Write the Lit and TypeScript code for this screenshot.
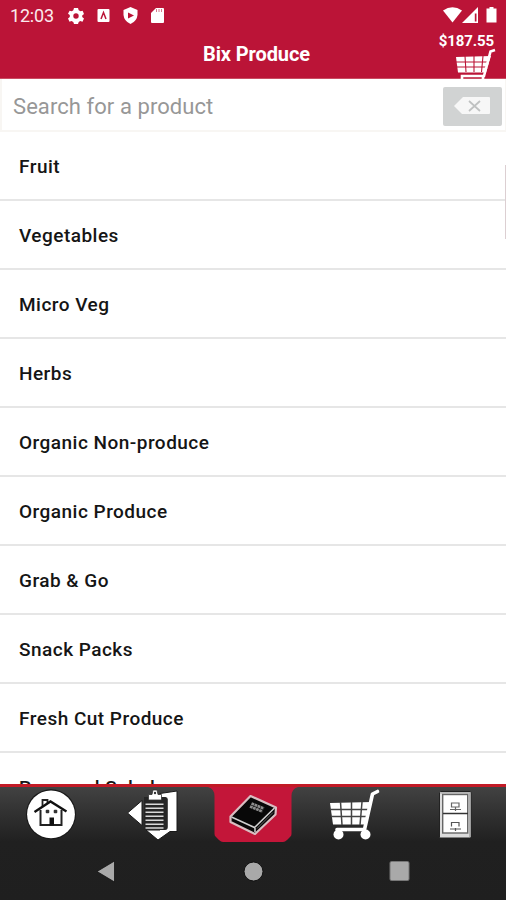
import { LitElement, html, css, svg } from "lit";
import { customElement } from "lit/decorators.js";

const CATEGORIES = [
  "Fruit",
  "Vegetables",
  "Micro Veg",
  "Herbs",
  "Organic Non-produce",
  "Organic Produce",
  "Grab & Go",
  "Snack Packs",
  "Fresh Cut Produce",
  "Prepared Salads",
];

// Shopping cart, drawn in a 56x56 box; grid lines take the colour of the backdrop.
const cart = (line: string) => svg`
  <path d="M4 16 L46 15 L40 37.500 L7 37.500Z" fill="#fff"/>
  <path d="M4 22.500H45M5 29.500H42M14.500 15L16 38M25.500 15V38M36 15L34 38" stroke="${line}" stroke-width="1.500" fill="none"/>
  <path d="M51.500 4.500 L46.500 7 L38.500 42.500 H11" stroke="#fff" stroke-width="3.600" fill="none" stroke-linecap="round" stroke-linejoin="round"/>
  <circle cx="12.500" cy="47.500" r="5" fill="#fff"/><circle cx="39.500" cy="47.500" r="5" fill="#fff"/>
  <path d="M9 46.500L13 42.500M36 46.500L39.500 42.500" stroke="#fff" stroke-width="2.500"/>`;

const homeIcon = html`<svg width="56" height="56" viewBox="0 0 56 56">
  <circle cx="28" cy="27.300" r="25" fill="#181818"/>
  <circle cx="28" cy="27.300" r="23.900" fill="#fff"/>
  <path d="M19.500 19V13H24.500V17" fill="#fff" stroke="#222" stroke-width="1.800"/>
  <path d="M17.500 23V38H38.500V23" fill="#fff" stroke="#222" stroke-width="2"/>
  <path d="M11.500 25L27.500 14.500L43.500 24.500" fill="none" stroke="#111" stroke-width="2.400"/>
  <path d="M26.500 30.500H31V38.500H26.500Z" fill="#111"/>
  <rect x="22.700" y="22.700" width="3.600" height="3.600" rx="1" fill="#333"/><rect x="30.700" y="22.700" width="3.600" height="3.600" rx="1" fill="#333"/>
</svg>`;

const orderIcon = html`<svg width="56" height="56" viewBox="0 0 56 56">
  <path d="M3.500 26L18 13.500V38.500Z" fill="#fff" stroke="#181818"/>
  <path d="M36 6.500L53 4V44.500H46L34 53L22 43H36Z" fill="#fff" stroke="#181818"/>
  <path d="M20 10H41.500Q43.800 10 43.800 12.500V40Q43.800 43 41 43H20Z" fill="#262626"/>
  <path d="M21.500 17.200H39.500M21.500 21.200H39.500M21.500 25.200H39.500M21.500 29.200H39.500M21.500 33.200H39.500M21.500 37.200H39.500M21.500 41H39.500" stroke="#d9d9d9" stroke-width="1.500"/>
  <path d="M24.500 7.500H28L29 3H33L34 7.500H37.500V13H24.500Z" fill="#fff" stroke="#333" stroke-width=".8"/>
  <circle cx="31" cy="6" r="1.200" fill="#333"/>
</svg>`;

const bookIcon = html`<svg width="56" height="56" viewBox="0 0 56 56">
  <path d="M25.500 9L51 20.500L50.500 27.500L30 47L5.500 35V29.500Z" fill="#080808" stroke="#d9bdc1" stroke-width="2.200" stroke-linejoin="round"/>
  <path d="M6.500 30L29.500 40.500L49.500 21" fill="none" stroke="#d0d0d0" stroke-width="1.500"/>
  <path d="M30 41V45" stroke="#d0d0d0" stroke-width="1.500"/>
  <path d="M48 25.500L32 41.500" stroke="#777" stroke-width=".8"/>
  <path d="M26.500 16.500L39 21.500M25 19.500L37.500 24.500" stroke="#8d8d8d" stroke-width="2.700" stroke-dasharray="2.800 .5"/>
</svg>`;

const cartIcon = html`<svg width="56" height="56" viewBox="0 0 56 56">${cart("#444")}</svg>`;

const cabinetIcon = html`<svg width="56" height="56" viewBox="0 0 56 56">
  <rect x="12.500" y="4.500" width="31.500" height="46.500" rx="1" fill="#dcdcdc" stroke="#222"/>
  <path d="M43 5.500V50" stroke="#a5a5a5" stroke-width="1.600"/>
  <path d="M13 5.800H43" stroke="#b5b5b5" stroke-width="1.600"/>
  <rect x="15.700" y="7.500" width="25" height="38.500" fill="#fff" stroke="#666" stroke-width="1.400"/>
  <path d="M16 26.500H41" stroke="#333" stroke-width="1.500"/>
  <path d="M24.500 16H32V20H24.500ZM23 22.500H34M28.500 20V24" fill="none" stroke="#666" stroke-width="1.200"/>
  <path d="M24.500 39.500V35.500H32V39.500M23 42H34M28.500 41V44" fill="none" stroke="#555" stroke-width="1.200"/>
</svg>`;

@customElement("app-root")
export class AppRoot extends LitElement {
  static styles = css`
    :host {
      display: flex;
      flex-direction: column;
      width: 506px;
      height: 900px;
      overflow: hidden;
      background: #fff;
      font-family: Roboto, "Liberation Sans", sans-serif;
    }
    svg { display: block; flex: none; }
    header {
      flex: none;
      height: 79px;
      box-sizing: border-box;
      background: #bb1437;
      border-bottom: 1px solid #c94d62;
      color: #fff;
      position: relative;
    }
    .status {
      height: 32px;
      display: flex;
      align-items: center;
      padding: 0 7px 0 10px;
      box-sizing: border-box;
    }
    .time { font-size: 18px; line-height: 32px; width: 58px; color: #fbe9ed; white-space: nowrap; letter-spacing: -0.2px; }
    .spacer { flex: 1; }
    .title {
      display: flex;
      justify-content: center;
      padding-left: 7px;
      font-size: 20px;
      font-weight: 700;
      line-height: 24px;
      margin-top: 10px;
      letter-spacing: -0.1px;
    }
    .total {
      position: absolute;
      right: 12px;
      top: 32px;
      font-size: 15px;
      font-weight: 700;
      line-height: 18px;
      letter-spacing: -0.1px;
    }
    .basket { position: absolute; right: 9px; top: 48px; }
    .search {
      flex: none;
      height: 53px;
      box-sizing: border-box;
      display: flex;
      align-items: center;
      justify-content: space-between;
      padding: 3px 3px 0 11px;
      border: 2px solid #f8f6f3;
      border-width: 0 1px 2px 2px;
      color: #979797;
      font-size: 22px;
    }
    .placeholder { letter-spacing: 0.07px; padding-top: 1px; }
    .clear {
      width: 59px;
      height: 39px;
      border-radius: 2px;
      background: #d1d3d3;
      display: flex;
      align-items: center;
      justify-content: center;
    }
    .list { flex: 1; min-height: 0; overflow: hidden; position: relative; }
    .row {
      height: 69px;
      box-sizing: border-box;
      border-bottom: 2px solid #e6e6e6;
      padding-left: 19px;
      font-size: 19px;
      font-weight: 500;
      line-height: 69px;
      letter-spacing: 0.48px;
      color: #151515;
      white-space: nowrap;
    }
    .thumb {
      position: absolute;
      right: 0;
      top: 33px;
      width: 1px;
      height: 74px;
      background: #dccfd2;
    }
    footer {
      flex: none;
      height: 116px;
      box-sizing: border-box;
      border-top: 3px solid #c21a26;
      background: linear-gradient(#424242 0, #303030 28px, #202020 55px, #1f1f1f 100%) padding-box;
    }
    .tabs { height: 57px; display: grid; grid-template-columns: repeat(5, 1fr); }
    .tab { display: flex; justify-content: center; position: relative; }
    .active-shape { position: absolute; left: 6px; top: 0; }
    .tab .icon { position: relative; }
    .system { height: 56px; display: grid; grid-template-columns: repeat(3, 1fr); padding: 0 33px; }
    .key { display: flex; align-items: center; justify-content: center; }
  `;

  render() {
    return html`
      <header>
        <div class="status">
          <span class="time">12:03</span>
          <svg width="100" height="22" viewBox="0 0 100 22" fill="#fff">
            <path d="M6 3H10L10.700 5.300L12.600 6.300L14.600 5.700L16 9L14.200 10.500V12L16 13.500L14.500 16.700L12.200 16L10.700 17L10 19H6L5.300 17L3.500 16L1.500 16.700L0 13.500L1.800 12V10L0 8.700L1.600 5.700L3.800 6.300L5.300 5.300ZM8 8.300A2.700 2.700 0 1 0 8 13.700A2.700 2.700 0 1 0 8 8.300Z" fill-rule="evenodd"/>
            <rect x="29.500" y="4" width="12" height="13" rx="1"/>
            <path d="M33 14L35.500 7.500L38 14" fill="none" stroke="#bb1437" stroke-width="1.500"/>
            <path d="M62.500 2L69.500 5V10Q69 16 62.500 19Q56 16 55.500 10V5Z"/>
            <path d="M60 7.500L66 10.500L60 13.500Z" fill="#bb1437"/>
            <path d="M88 3H95Q96 3 96 4V17Q96 18 95 18H84Q83 18 83 17V8Z"/>
            <path d="M88.500 4V7M91 4V7M93.500 4V7" stroke="#d8788c" stroke-width="1"/>
          </svg>
          <span class="spacer"></span>
          <svg width="58" height="22" viewBox="0 0 58 22" fill="#fff">
            <path d="M2 5.500Q11.500-1 21 5.500L11.500 17.500Z"/>
            <path d="M21 18L37 2V18Z"/>
            <path d="M33.800 8.500H35.500V16.500H33.800Z" fill="#bb1437"/>
            <path d="M48.500 2H52.500V3.500H55.500V17.500H45.500V3.500H48.500Z"/>
          </svg>
        </div>
        <div class="title">Bix Produce</div>
        <div class="total">$187.55</div>
        <svg class="basket" width="42" height="31" viewBox="0 0 42 31">
          <path d="M1 9L36 8L31 24.500H3Z" fill="#fff"/>
          <path d="M1 14H35M2 19H33M10 8L11 24M19 8V24M28 8L26.500 24" stroke="#bb1437" stroke-width="1.100"/>
          <path d="M40 2L35.500 3.500L29 28H7V31" fill="none" stroke="#fff" stroke-width="2.600"/>
          <path d="M28 27V31" stroke="#fff" stroke-width="2.600"/>
        </svg>
      </header>
      <div class="search">
        <span class="placeholder">Search for a product</span>
        <div class="clear">
          <svg width="37" height="20" viewBox="0 0 37 20">
            <path d="M0 10L9 1H35Q36 1 36 2V17Q36 18 35 18H8Z" fill="#f7f7f7"/>
            <path d="M15 5L26 15M26 5L15 15" stroke="#bfc1c1" stroke-width="1.700"/>
          </svg>
        </div>
      </div>
      <div class="list">
        ${CATEGORIES.map((name) => html`<div class="row">${name}</div>`)}
        <div class="thumb"></div>
      </div>
      <footer>
        <div class="tabs">
          <div class="tab"><div class="icon">${homeIcon}</div></div>
          <div class="tab"><div class="icon">${orderIcon}</div></div>
          <div class="tab">
            <svg class="active-shape" width="90" height="56" viewBox="0 0 90 56">
              <path d="M0 0Q6.500 2 6.500 9V47Q6.500 49 8 50L11 53Q13 55 15 55H75Q77 55 79 53L82 50Q83.500 49 83.500 47V9Q83.500 2 90 0Z" fill="#c31639"/>
            </svg>
            <div class="icon">${bookIcon}</div>
          </div>
          <div class="tab"><div class="icon">${cartIcon}</div></div>
          <div class="tab"><div class="icon">${cabinetIcon}</div></div>
        </div>
        <div class="system">
          <div class="key"><svg width="20" height="24" viewBox="0 0 20 24"><path d="M1 11.500L18.500 1V22Z" fill="#a9a9a9" stroke="#111" stroke-width=".8"/></svg></div>
          <div class="key"><svg width="22" height="22" viewBox="0 0 22 22"><circle cx="11.500" cy="10.500" r="9.500" fill="#a9a9a9" stroke="#111"/></svg></div>
          <div class="key"><svg width="22" height="22" viewBox="0 0 22 22"><rect x="1" y="0.500" width="19" height="19" rx="1.500" fill="#a9a9a9" stroke="#777"/></svg></div>
        </div>
      </footer>
    `;
  }
}
